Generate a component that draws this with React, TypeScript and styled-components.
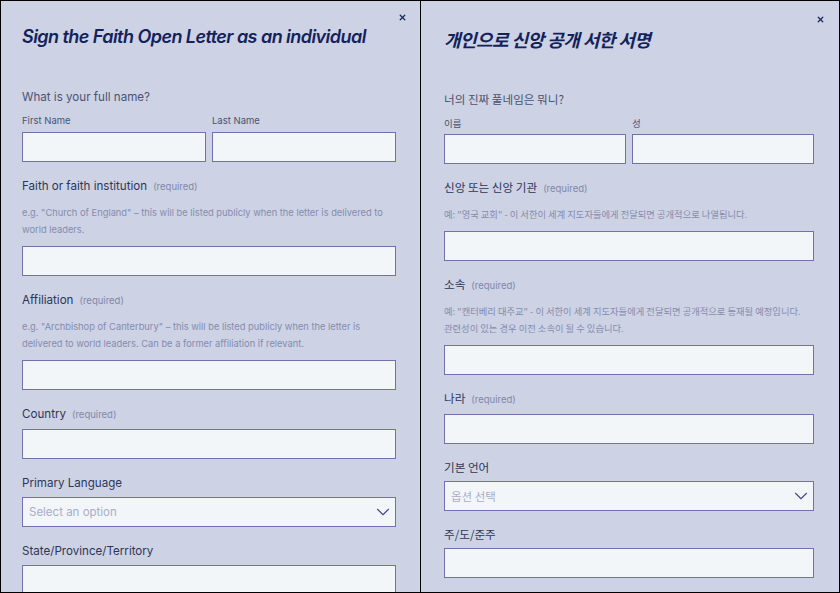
import React from 'react'
import styled, { createGlobalStyle } from 'styled-components'
import { ChevronDown, X } from 'lucide-react'

const GlobalStyle = createGlobalStyle`
  html, body {
    margin: 0;
    padding: 0;
    background: #cdd2e5;
  }
  * {
    box-sizing: border-box;
  }
`;

const Frame = styled.div`
  display: flex;
  width: 840px;
  height: 593px;
  border: 1px solid #000;
  overflow: hidden;
  background: #cdd2e5;
`;

const Panel = styled.section<{ $kr?: boolean }>`
  position: relative;
  flex: 0 0 419px;
  padding: ${(p) => (p.$kr ? '25px 25px 0 23px' : '23px 24px 0 21px')};
  border-left: ${(p) => (p.$kr ? '1px solid #000' : 'none')};
  font-family: ${(p) =>
    p.$kr ? '"Noto Sans CJK KR", "Noto Sans", sans-serif' : 'Inter, "Noto Sans", sans-serif'};
  word-break: ${(p) => (p.$kr ? 'keep-all' : 'normal')};
  color: #343c5e;
`;

const CloseButton = styled.button<{ $kr?: boolean }>`
  position: absolute;
  top: ${(p) => (p.$kr ? '14px' : '12px')};
  right: ${(p) => (p.$kr ? '14px' : '13px')};
  display: flex;
  padding: 0;
  border: 0;
  background: none;
  color: #1b2a5c;
  cursor: pointer;
`;

const Title = styled.h2`
  margin: 0 0 38px;
  font-size: 18px;
  line-height: 26px;
  font-weight: 600;
  font-style: italic;
  color: #13225a;
  letter-spacing: -0.55px;
`;

const Question = styled.div`
  margin-bottom: 8px;
  font-size: 11.6px;
  line-height: 18px;
  color: #4a5273;
`;

const NameRow = styled.div`
  display: grid;
  grid-template-columns: 1fr 1fr;
  gap: 6px;
`;

const SubLabel = styled.label`
  display: block;
  margin-bottom: 4px;
  font-size: 9.5px;
  line-height: 14px;
  color: #4a5273;
`;

const Field = styled.div<{ $kr?: boolean }>`
  margin-top: ${(p) => (p.$kr ? '14px' : '15px')};
`;

const Label = styled.label`
  display: block;
  margin-bottom: 5px;
  font-size: 11.6px;
  line-height: 18px;
  color: #2e3658;
`;

const Required = styled.span`
  margin-left: 6px;
  font-family: Inter, "Noto Sans", sans-serif;
  font-size: 9.5px;
  color: #8088a9;
`;

const Help = styled.p`
  margin: 8px 0 8px;
  font-size: 9.3px;
  line-height: 17px;
  color: #858cae;
`;

const Input = styled.input`
  display: block;
  width: 100%;
  height: 30px;
  margin: 0;
  padding: 0 8px;
  border: 1px solid #7370ad;
  background: #f3f6f8;
  font: inherit;
`;

const SelectBox = styled.div`
  display: flex;
  align-items: center;
  justify-content: space-between;
  height: 30px;
  padding: 0 1px 0 6px;
  border: 1px solid #7370ad;
  background: #f3f6f8;
  font-size: 11.5px;
  color: #a9abcb;
  svg {
    color: #45488f;
  }
`;

type Copy = {
  kr?: boolean;
  title: string;
  question: string;
  first: string;
  last: string;
  faith: string;
  faithHelp: string;
  affiliation: string;
  affiliationHelp: string;
  country: string;
  language: string;
  placeholder: string;
  state: string;
};

const english: Copy = {
  title: 'Sign the Faith Open Letter as an individual',
  question: 'What is your full name?',
  first: 'First Name',
  last: 'Last Name',
  faith: 'Faith or faith institution',
  faithHelp:
    'e.g. "Church of England" – this will be listed publicly when the letter is delivered to world leaders.',
  affiliation: 'Affiliation',
  affiliationHelp:
    'e.g. "Archbishop of Canterbury" – this will be listed publicly when the letter is delivered to world leaders. Can be a former affiliation if relevant.',
  country: 'Country',
  language: 'Primary Language',
  placeholder: 'Select an option',
  state: 'State/Province/Territory',
};

const korean: Copy = {
  kr: true,
  title: '개인으로 신앙 공개 서한 서명',
  question: '너의 진짜 풀네임은 뭐니?',
  first: '이름',
  last: '성',
  faith: '신앙 또는 신앙 기관',
  faithHelp: '예: "영국 교회" - 이 서한이 세계 지도자들에게 전달되면 공개적으로 나열됩니다.',
  affiliation: '소속',
  affiliationHelp:
    '예: "캔터베리 대주교" - 이 서한이 세계 지도자들에게 전달되면 공개적으로 등재될 예정입니다. 관련성이 있는 경우 이전 소속이 될 수 있습니다.',
  country: '나라',
  language: '기본 언어',
  placeholder: '옵션 선택',
  state: '주/도/준주',
};

function SignForm({ copy }: { copy: Copy }) {
  const kr = copy.kr;
  return (
    <Panel $kr={kr}>
      <CloseButton $kr={kr} aria-label="Close">
        <X size={9} strokeWidth={3.5} />
      </CloseButton>
      <Title>{copy.title}</Title>

      <Question>{copy.question}</Question>
      <NameRow>
        <div>
          <SubLabel>{copy.first}</SubLabel>
          <Input />
        </div>
        <div>
          <SubLabel>{copy.last}</SubLabel>
          <Input />
        </div>
      </NameRow>

      <Field $kr={kr}>
        <Label>
          {copy.faith}
          <Required>(required)</Required>
        </Label>
        <Help>{copy.faithHelp}</Help>
        <Input />
      </Field>

      <Field $kr={kr}>
        <Label>
          {copy.affiliation}
          <Required>(required)</Required>
        </Label>
        <Help>{copy.affiliationHelp}</Help>
        <Input />
      </Field>

      <Field $kr={kr}>
        <Label>
          {copy.country}
          <Required>(required)</Required>
        </Label>
        <Input />
      </Field>

      <Field $kr={kr}>
        <Label>{copy.language}</Label>
        <SelectBox>
          <span>{copy.placeholder}</span>
          <ChevronDown size={22} strokeWidth={1.2} />
        </SelectBox>
      </Field>

      <Field $kr={kr}>
        <Label>{copy.state}</Label>
        <Input />
      </Field>
    </Panel>
  );
}

export default function App() {
  return (
    <>
      <GlobalStyle />
      <Frame>
        <SignForm copy={english} />
        <SignForm copy={korean} />
      </Frame>
    </>
  );
}
